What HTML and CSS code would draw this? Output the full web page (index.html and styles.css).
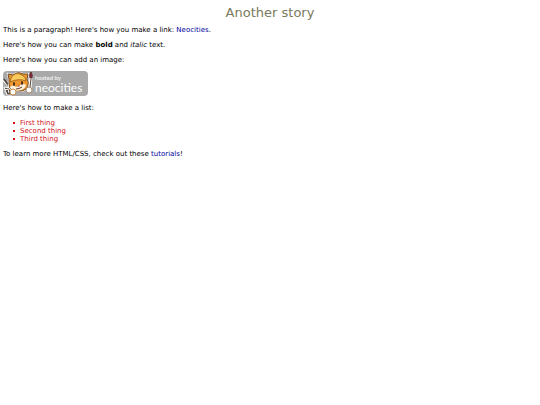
FILE: index.html
```
<!DOCTYPE html>
<html lang="en">
<head>
	<meta charset="utf-8" />
	<meta name="viewport" content="width=device-width, initial-scale=1" />
	<title>Another story</title>
	<link rel="stylesheet" href="styles.css">
</head>
<body>
	<h1 class="title">Another story</h1>

	<p>This is a paragraph! Here's how you make a link: <a href="https://neocities.org">Neocities</a>.</p>

	<p>Here's how you can make <strong>bold</strong> and <em>italic</em> text.</p>

	<p>Here's how you can add an image:</p>

	<div class="badge">
		<svg class="cat" viewBox="0 0 31 26" aria-hidden="true">
			<!-- tail and pencil -->
			<path d="M1 9 L7 16" stroke="#fff" stroke-width="3"/>
			<path d="M1 8 L6 15" stroke="#54463c" stroke-width="2"/>
			<path d="M1 16 L7 17 L9 24 L4 24 Z" fill="#54463c" stroke="#fff" stroke-width="1"/>
			<path d="M2 19 L5 18 L6 22" fill="none" stroke="#fff" stroke-width="1"/>
			<!-- head -->
			<path d="M6 8 L5 3 L10 4 Q15 0 20 3 L25 3 L24 8 Q27 13 23 18 L19 20 L10 20 Q5 17 6 12 Z" fill="#ee982f" stroke="#fff" stroke-width="2"/>
			<path d="M6 8 L5 3 L10 4 Q15 0 20 3 L25 3 L24 8 Q27 13 23 18 L19 20 L10 20 Q5 17 6 12 Z" fill="#ee982f" stroke="#6b4828" stroke-width="1"/>
			<path d="M8 7 Q12 0 19 4 Q23 6 23 10 Q16 7 7 11 Z" fill="#f9cb5c" stroke="#a86d22" stroke-width="1"/>
			<path d="M7 16 Q10 13 13 16 L17 14 Q21 12 23 14 Q22 18 18 19 Q12 21 8 18 Z" fill="#fff3df"/>
			<ellipse cx="11" cy="13" rx="1" ry="2" fill="#3b2b22"/>
			<ellipse cx="19" cy="12" rx="1" ry="2" fill="#3b2b22"/>
			<path d="M14 15 L17 14 L16 16 Z" fill="#b2452c"/>
			<path d="M13 18 Q16 18 19 16" fill="none" stroke="#6b3b26" stroke-width="1"/>
			<!-- brush -->
			<path d="M28 4 L27 18" stroke="#fff" stroke-width="3" stroke-linecap="round"/>
			<path d="M28 8 L27 16" stroke="#54402f" stroke-width="1"/>
			<path d="M27 7 Q26 3 28 1 Q30 4 29 7 Z" fill="#8f2530" stroke="#5d3034" stroke-width="1"/>
			<!-- paws -->
			<circle cx="10" cy="21" r="3" fill="#fff" stroke="#c48b4a" stroke-width="1"/>
			<circle cx="26" cy="19" r="3" fill="#fff" stroke="#a98d70" stroke-width="1"/>
		</svg>
		<span class="badge-text">
			<span class="hosted">hosted by</span>
			<span class="name">neocities</span>
		</span>
	</div>

	<p>Here's how to make a list:</p>

	<ul>
		<li>First thing</li>
		<li>Second thing</li>
		<li>Third thing</li>
	</ul>

	<p>To learn more HTML/CSS, check out these <a href="https://neocities.org/tutorials">tutorials</a>!</p>
</body>
</html>
```

FILE: styles.css
```
body{
	margin: 5px 3px;
	background-color: #fff;
	color: #000;
	font-family: Verdana, "DejaVu Sans", sans-serif;
	font-size: 7px;
	line-height: 8px;
}
p,ul{
	margin: 0 0 7px;
}
ul{
	padding-left: 10px;
	color: #d3151b;
}
li{
	display: flex;
	align-items: center;
	gap: 5px;
}
li::before{
	content: "";
	width: 2px;
	height: 2px;
	background-color: #d3151b;
}
a{
	color: #00009c;
	text-decoration: none;
}
.title{
	margin: 0 0 5px;
	color: #7a7a5c;
	font-size: 13px;
	font-weight: normal;
	line-height: 16px;
	text-align: center;
}
.badge{
	display: flex;
	width: 85px;
	height: 25px;
	margin: 6px 0 8px;
	border-radius: 4px;
	background-color: #a9a9a9;
	color: #fff;
}
.cat{
	flex: none;
	width: 31px;
	height: 26px;
}
.badge-text{
	display: flex;
	flex-direction: column;
	padding: 3px 0 0 1px;
	font-family: "Liberation Sans Narrow", Lato, sans-serif;
	white-space: nowrap;
}
.hosted{
	font-size: 6px;
	line-height: 7px;
}
.name{
	font-size: 12px;
	line-height: 13px;
}
```
